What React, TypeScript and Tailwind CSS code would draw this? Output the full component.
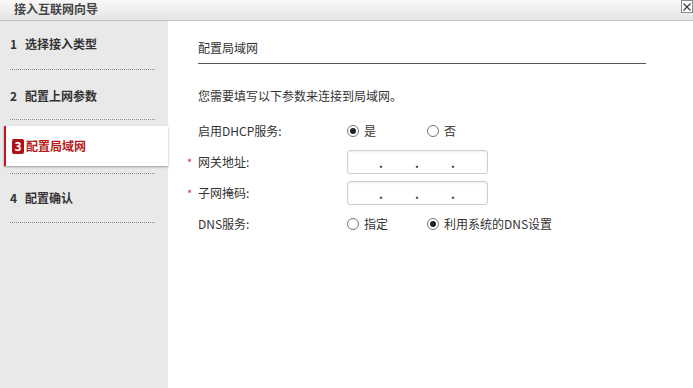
import { ReactNode } from "react"

const font = { fontFamily: '"Noto Sans CJK SC", "Liberation Sans", sans-serif' }

function Dotted() {
  return <div className="mx-[10px] mr-[13px] border-b border-dotted border-[#8a8a8a]" />
}

function StepItem({ num, label, h, pt }: { num: string; label: string; h: string; pt: string }) {
  return (
    <div className={`${h} flex flex-col`}>
      <div className={`${pt} flex items-center pl-[10px] text-[12px] font-bold leading-4 text-[#333]`}>
        <span className="w-[15px]">{num}</span>
        <span>{label}</span>
      </div>
      <div className="mt-auto">
        <Dotted />
      </div>
    </div>
  )
}

function Radio({ checked, label, w }: { checked?: boolean; label: string; w?: string }) {
  return (
    <div className={`flex items-center ${w ?? ""}`}>
      <span className="flex h-[12px] w-[12px] items-center justify-center rounded-full border border-[#777] bg-white">
        {checked && <span className="h-[6px] w-[6px] rounded-full bg-[#222]" />}
      </span>
      <span className="ml-[5px]">{label}</span>
    </div>
  )
}

function IpInput() {
  return (
    <div className="flex h-[24px] w-[141px] items-end rounded-[3px] border border-[#cfcfcf] bg-white pb-[2px] shadow-[inset_0_1px_2px_rgba(0,0,0,0.08)]">
      <span className="w-[31px]" />
      <span className="w-[36px] text-[12px] font-bold leading-4">.</span>
      <span className="w-[36px] text-[12px] font-bold leading-4">.</span>
      <span className="w-[30px] text-[12px] font-bold leading-4">.</span>
    </div>
  )
}

function Row({ star, label, children, h }: { star?: boolean; label: string; children: ReactNode; h: string }) {
  return (
    <div className={`${h} -ml-[12px] flex items-center`}>
      <span className="w-[12px] pl-[1px] pt-[2px] text-[11px] text-[#c83a3a]">{star ? "*" : ""}</span>
      <span className="w-[149px]">{label}</span>
      {children}
    </div>
  )
}

export default function App() {
  return (
    <div className="flex h-[388px] w-[693px] flex-col overflow-hidden bg-white text-[12px] text-[#333]" style={font}>
      <div className="flex h-[21px] shrink-0 items-start border-b border-[#c4c4c4] bg-gradient-to-b from-[#f8f8f8] to-[#e4e4e4]">
        <span className="pl-[14px] pt-[1px] text-[12px] font-bold leading-4 text-[#444]">接入互联网向导</span>
        <span className="ml-auto flex h-[13px] w-[12px] items-center justify-center border border-[#8a8a8a] bg-white">
          <svg width="10" height="10" viewBox="0 0 10 10">
            <path d="M1.5 1.5 L8.5 8.5 M8.5 1.5 L1.5 8.5" stroke="#333" strokeWidth="1.1" />
          </svg>
        </span>
      </div>

      <div className="flex flex-1">
        <div className="flex w-[168px] shrink-0 flex-col bg-[#e9e9e9]">
          <StepItem num="1" label="选择接入类型" h="h-[49px]" pt="pt-[15px]" />
          <StepItem num="2" label="配置上网参数" h="h-[50px]" pt="pt-[18px]" />
          <div className="flex h-[54px] flex-col">
            <div className="ml-[4px] mt-[6px] flex h-[40px] items-center border-l-2 border-[#c4161c] bg-white pl-[6px] shadow-[0_1px_2px_rgba(0,0,0,0.35)]">
              <span className="flex h-[15px] w-[12px] items-center justify-center rounded-[2px] bg-[#b01116] text-[12px] font-bold leading-none text-white">3</span>
              <span className="ml-[2px] text-[12px] font-bold leading-4 text-[#b51a20]">配置局域网</span>
            </div>
            <div className="mt-auto">
              <Dotted />
            </div>
          </div>
          <StepItem num="4" label="配置确认" h="h-[49px]" pt="pt-[16px]" />
        </div>

        <div className="flex-1 pl-[30px] pr-[47px]">
          <div className="border-b border-[#555] pb-[7px] pt-[19px] leading-4">配置局域网</div>
          <div className="mt-[24px] leading-4">您需要填写以下参数来连接到局域网。</div>
          <div className="mt-[11px]">
            <Row label="启用DHCP服务:" h="h-[31px]">
              <Radio checked label="是" w="w-[80px]" />
              <Radio label="否" />
            </Row>
            <Row star label="网关地址:" h="h-[31px]">
              <IpInput />
            </Row>
            <Row star label="子网掩码:" h="h-[31px]">
              <IpInput />
            </Row>
            <Row label="DNS服务:" h="h-[31px]">
              <Radio label="指定" w="w-[80px]" />
              <Radio checked label="利用系统的DNS设置" />
            </Row>
          </div>
        </div>
      </div>
    </div>
  )
}
